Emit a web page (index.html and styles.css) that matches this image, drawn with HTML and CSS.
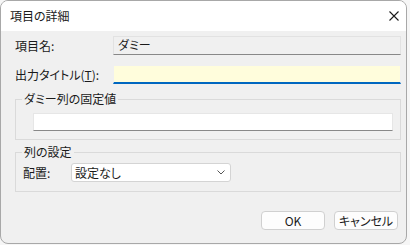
FILE: index.html
```html
<!DOCTYPE html>
<html lang="ja">
<head>
    <meta charset="UTF-8">
    <title>項目の詳細</title>
    <link rel="stylesheet" href="styles.css">
</head>
<body>
    <div class="dialog">
        <div class="titlebar">
            <span class="title">項目の詳細</span>
            <svg class="close-icon" width="10" height="10" viewBox="0 0 10 10">
                <path d="M0.5 0.5 L9.5 9.5 M9.5 0.5 L0.5 9.5" stroke="#1a1a1a" stroke-width="1.1" fill="none"/>
            </svg>
        </div>

        <div class="content">
            <div class="form-row">
                <label class="row-label">項目名:</label>
                <div class="textbox readonly">ダミー</div>
            </div>
            <div class="form-row second">
                <label class="row-label">出力タイトル(<u>T</u>):</label>
                <div class="textbox focused"></div>
            </div>

            <fieldset class="group fixed-group">
                <legend>ダミー列の固定値</legend>
                <div class="textbox plain"></div>
            </fieldset>

            <fieldset class="group column-group">
                <legend>列の設定</legend>
                <div class="combo-row">
                    <label class="combo-label">配置:</label>
                    <div class="combo">
                        <span>設定なし</span>
                        <svg width="8" height="5" viewBox="0 0 8 5">
                            <path d="M0.5 0.5 L4 4 L7.5 0.5" stroke="#555" stroke-width="1" fill="none"/>
                        </svg>
                    </div>
                </div>
            </fieldset>

            <div class="buttons">
                <button class="btn">OK</button>
                <button class="btn">キャンセル</button>
            </div>
        </div>
    </div>
</body>
</html>
```

FILE: styles.css
```css
body {
    margin: 0;
    background-color: #f6f6f6;
    font-family: "Noto Sans CJK JP", "Noto Sans", sans-serif;
    font-size: 12px;
    font-feature-settings: "palt";
    color: #1a1a1a;
}
.dialog {
    width: 407px;
    height: 244px;
    box-sizing: border-box;
    border: 1px solid #a8a8a8;
    border-radius: 8px;
    overflow: hidden;
    display: flex;
    flex-direction: column;
    background-color: #f0f0f0;
}
.titlebar {
    height: 30px;
    flex: none;
    background-color: #ffffff;
    display: flex;
    align-items: center;
    justify-content: space-between;
    padding: 0 7px 0 9px;
}
.title {
    line-height: 14px;
}
.close-icon {
    margin-bottom: 1px;
}
.content {
    flex: 1;
    padding: 5px 5px 0 14px;
    display: flex;
    flex-direction: column;
}
.form-row {
    display: flex;
    align-items: center;
    height: 19px;
}
.form-row.second {
    margin-top: 10px;
}
.row-label {
    width: 98px;
    flex: none;
    line-height: 14px;
}
.textbox {
    box-sizing: border-box;
    height: 19px;
    border: 1px solid #e2e2e2;
    border-bottom-color: #888888;
    padding: 0 4px;
    line-height: 16px;
}
.form-row .textbox {
    width: 288px;
}
.textbox.readonly {
    background-color: #f0f0f0;
}
.textbox.focused {
    background-color: #fffddc;
    border-color: #f0f0f0;
    border-bottom: 2px solid #0067c0;
}
.textbox.plain {
    height: 18px;
    background-color: #ffffff;
    border-color: #e6e6e6;
    border-bottom-color: #888888;
}
.group {
    margin: 0;
    min-width: 0;
    width: 386px;
    box-sizing: border-box;
    border: 1px solid #dadada;
    padding: 0 7px 8px 17px;
}
.group legend {
    padding: 0 2px;
    margin-left: -11px;
    line-height: 14px;
}
.fixed-group {
    margin-top: 8px;
}
.fixed-group .textbox {
    margin-top: 7px;
}
.column-group {
    margin-top: 5px;
    padding-left: 7px;
    padding-bottom: 9px;
}
.column-group legend {
    margin-left: -1px;
}
.combo-row {
    display: flex;
    align-items: center;
    margin-top: 4px;
}
.combo-label {
    width: 48px;
    flex: none;
    line-height: 14px;
}
.combo {
    box-sizing: border-box;
    width: 160px;
    height: 19px;
    background-color: #ffffff;
    border: 1px solid #d4d4d4;
    border-radius: 3px;
    display: flex;
    align-items: center;
    justify-content: space-between;
    padding: 0 5px 0 3px;
}
.buttons {
    display: flex;
    justify-content: flex-end;
    gap: 9px;
    margin-top: 19px;
    padding-right: 3px;
}
.btn {
    width: 64px;
    height: 19px;
    box-sizing: border-box;
    background-color: #fdfdfd;
    border: 1px solid #d0d0d0;
    border-radius: 4px;
    font-family: inherit;
    font-size: 12px;
    font-feature-settings: "palt";
    color: #1a1a1a;
    padding: 0;
    line-height: 16px;
}
```
